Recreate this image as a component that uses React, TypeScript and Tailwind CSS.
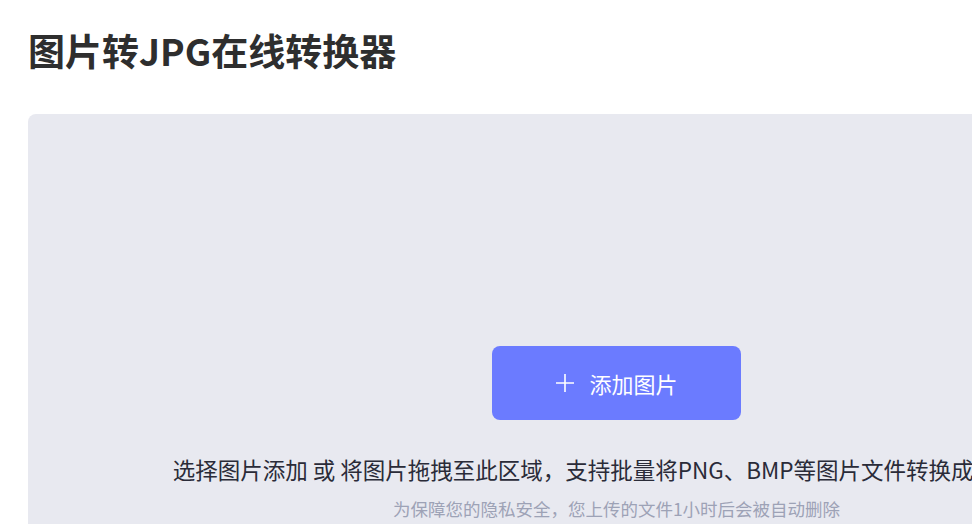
import { FC } from 'react';

const PlusIcon: FC = () => (
    <svg width="20" height="20" viewBox="0 0 20 20" fill="none">
        <path d="M10 1v18M1 10h18" stroke="white" strokeWidth="1.6" />
    </svg>
);

const App: FC = () => {
    return (
        <div className="w-full overflow-hidden bg-white" style={{ fontFamily: '"Noto Sans CJK SC", "Noto Sans", sans-serif' }}>
            <div className="w-[1233px] px-[28px]">
                <h1 className="pt-[25px] text-[37px] leading-[50px] font-bold text-[#2e2e2e]">图片转JPG在线转换器</h1>

                <div className="mt-[39px] h-[480px] rounded-[8px] bg-[#e8e9f0] flex flex-col items-center pt-[232px]">
                    <button className="w-[249px] h-[74px] rounded-[8px] bg-[#6b7bff] text-white flex items-center justify-center gap-[14px] text-[22px]">
                        <PlusIcon />
                        <span className="leading-[30px]">添加图片</span>
                    </button>
                    <p className="mt-[34px] text-[22.5px] leading-[30px] text-[#2a2b38] whitespace-nowrap">
                        选择图片添加 或 将图片拖拽至此区域，支持批量将PNG、BMP等图片文件转换成JPG格式
                    </p>
                    <p className="mt-[13px] text-[17.5px] leading-[24px] text-[#9da2b6] whitespace-nowrap">
                        为保障您的隐私安全，您上传的文件1小时后会被自动删除
                    </p>
                </div>
            </div>
        </div>
    );
};

export default App;
